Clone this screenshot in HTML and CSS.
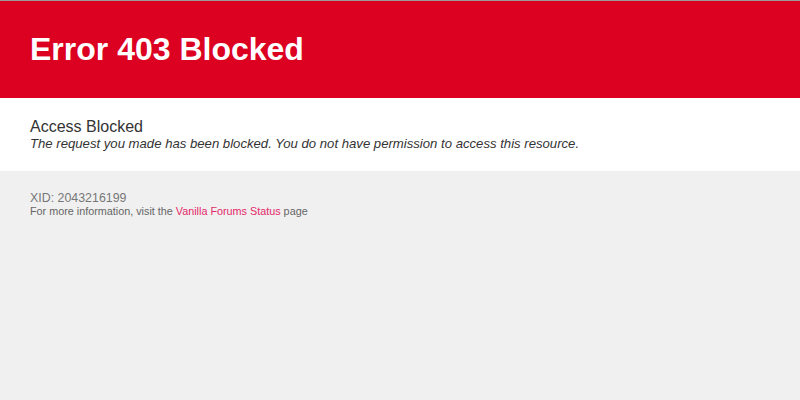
FILE: index.html
```html
<!DOCTYPE html>
<html>
<head>
<meta charset="utf-8">
<link rel="stylesheet" href="styles.css">
</head>
<body>
<div class="header">
  <h1 class="title">Error 403 Blocked</h1>
</div>
<div class="message">
  <div class="msg-title">Access Blocked</div>
  <div class="msg-text">The request you made has been blocked. You do not have permission to access this resource.</div>
</div>
<div class="footer">
  <div class="xid">XID: 2043216199</div>
  <div class="info">For more information, visit the <a class="link" href="#">Vanilla Forums Status</a> page</div>
</div>
</body>
</html>
```
FILE: styles.css
```css
html, body {
  margin: 0;
  padding: 0;
  height: 100%;
}
body {
  background: #f0f0f0;
  font-family: "Liberation Sans", Arial, sans-serif;
  border-top: 1px solid #999;
}
.header {
  background: #dc0021;
  height: 97px;
  padding: 0 30px;
  display: flex;
  align-items: center;
}
.title {
  margin: 0;
  color: #fff;
  font-size: 32px;
  font-weight: bold;
}
.message {
  background: #fff;
  padding: 20px 30px 19px;
  color: #333;
}
.msg-title {
  font-size: 16px;
  line-height: 18px;
}
.msg-text {
  font-size: 13.15px;
  font-style: italic;
  line-height: 16px;
}
.footer {
  padding: 20px 30px;
  color: #777;
}
.xid {
  font-size: 12.4px;
  line-height: 14px;
}
.info {
  font-size: 10.8px;
  line-height: 13px;
  color: #666;
}
.link {
  color: #e4286a;
  text-decoration: none;
}
```
